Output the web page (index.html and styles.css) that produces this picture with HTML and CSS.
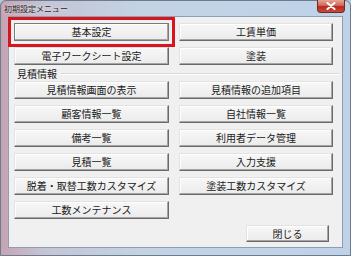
FILE: index.html
```html
<!DOCTYPE html>
<html lang="ja">
<head>
    <meta charset="UTF-8">
    <title>初期設定メニュー</title>
    <link rel="stylesheet" href="styles.css">
</head>
<body>
    <div class="window">
        <div class="titlebar">
            <span class="title">初期設定メニュー</span>
            <span class="close-x">
                <svg width="10" height="8" viewBox="0 0 10 8">
                    <path d="M1.5 1 L8.5 7 M8.5 1 L1.5 7" stroke="#fff" stroke-width="2" stroke-linecap="round"/>
                </svg>
            </span>
        </div>

        <div class="client">
            <div class="grid">
                <button class="btn marked">基本設定</button>
                <button class="btn">工賃単価</button>
                <button class="btn">電子ワークシート設定</button>
                <button class="btn">塗装</button>
            </div>

            <div class="group">
                <span class="group-label">見積情報</span>
                <span class="group-line"></span>
            </div>

            <div class="grid">
                <button class="btn">見積情報画面の表示</button>
                <button class="btn">見積情報の追加項目</button>
                <button class="btn">顧客情報一覧</button>
                <button class="btn">自社情報一覧</button>
                <button class="btn">備考一覧</button>
                <button class="btn">利用者データ管理</button>
                <button class="btn">見積一覧</button>
                <button class="btn">入力支援</button>
                <button class="btn">脱着・取替工数カスタマイズ</button>
                <button class="btn">塗装工数カスタマイズ</button>
                <button class="btn">工数メンテナンス</button>
            </div>

            <div class="footer">
                <button class="btn close-btn">閉じる</button>
            </div>
        </div>
    </div>
</body>
</html>
```

FILE: styles.css
```css
* {
    box-sizing: border-box;
    margin: 0;
    padding: 0;
}

body {
    width: 351px;
    height: 256px;
    overflow: hidden;
    font-family: "Noto Sans CJK JP", "Noto Sans", sans-serif;
    background: #b8c8da;
}

.window {
    width: 351px;
    height: 256px;
    display: flex;
    flex-direction: column;
    padding: 0 7px 7px 7px;
    background: linear-gradient(to right, #c7a3b3 0%, #c5c4d4 12%, #c3d3e4 40%, #bfd2e8 100%);
    border: 1px solid #6b7b90;
    border-radius: 6px 6px 0 0;
    position: relative;
}

.titlebar {
    height: 15px;
    display: flex;
    justify-content: space-between;
    align-items: flex-start;
    margin-left: -4px;
    margin-right: -2px;
}

.title {
    font-size: 8px;
    line-height: 13px;
    margin-top: 1px;
    color: #1e1e1e;
    text-shadow: 0 0 3px rgba(255, 255, 255, 0.9);
}

.close-x {
    width: 28px;
    height: 13px;
    margin-top: -1px;
    display: flex;
    align-items: center;
    justify-content: center;
    background: linear-gradient(#e8a593 0%, #d0685a 45%, #b8281a 55%, #c94a3a 100%);
    border: 1px solid #6e2a24;
    border-top: none;
    border-radius: 0 0 4px 4px;
}

.client {
    flex: 1;
    display: flex;
    flex-direction: column;
    background: #f0f0f0;
    border: 1px solid #8d9db2;
    padding: 6px 11px 0 5px;
}

.grid {
    display: grid;
    grid-template-columns: 155px 154px;
    column-gap: 10px;
    row-gap: 6px;
}

.btn {
    height: 18px;
    font-family: "Noto Sans CJK JP", sans-serif;
    font-size: 10px;
    line-height: 14px;
    color: #202020;
    background: linear-gradient(#f7f7f7, #ebebeb);
    border: 1px solid;
    border-color: #e2e2e2 #6a6a6a #6a6a6a #e2e2e2;
    box-shadow: inset -1px -1px #a5a5a5, inset 1px 1px #ffffff;
}

.marked {
    border-color: #7a7a7a;
    outline: 3px solid #d8151d;
    outline-offset: 3px;
}

.group {
    height: 16px;
    padding-top: 2px;
    display: flex;
    align-items: center;
    margin-right: -8px;
}

.group-label {
    font-size: 10px;
    line-height: 12px;
    color: #202020;
    padding: 0 4px 0 3px;
}

.group-line {
    flex: 1;
    border-top: 1px solid #d0d8de;
    border-bottom: 1px solid #ffffff;
}

.footer {
    display: flex;
    justify-content: flex-end;
    margin-top: 6px;
    padding-right: 2px;
}

.close-btn {
    width: 83px;
    height: 17px;
}
```
